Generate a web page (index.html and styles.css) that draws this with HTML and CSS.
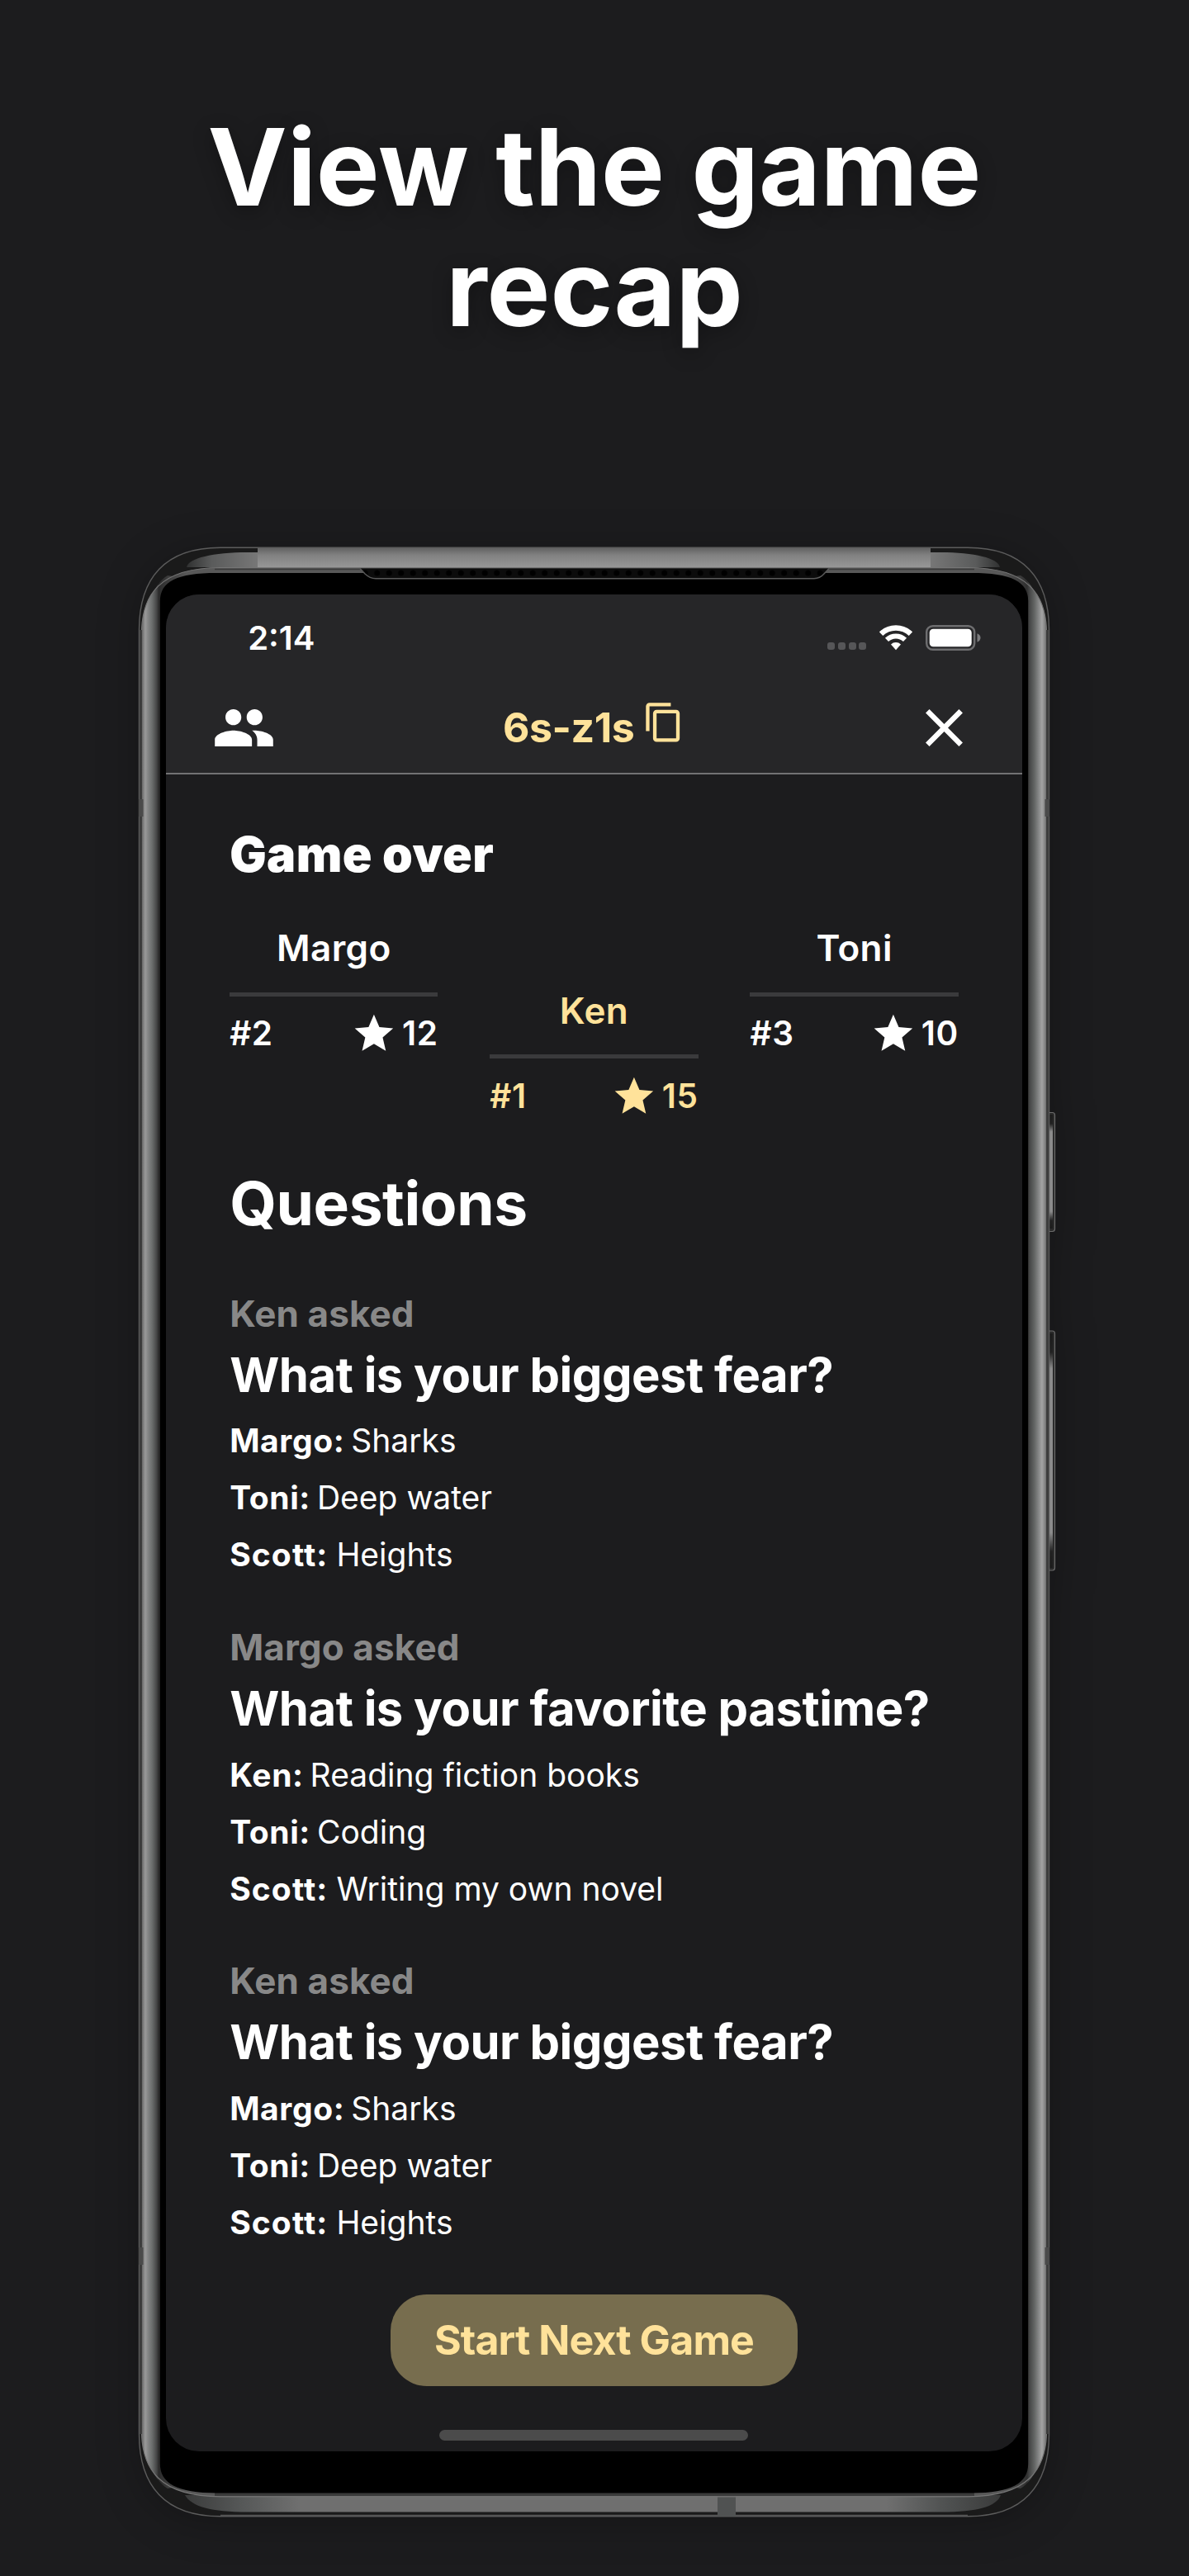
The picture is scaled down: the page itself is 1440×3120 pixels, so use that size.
FILE: index.html
```
<!DOCTYPE html>
<html lang="en">
<head>
<meta charset="utf-8">
<title>View the game recap</title>
<link rel="stylesheet" href="styles.css">
</head>
<body>
<main class="page">
  <h1 class="headline">View the game<br>recap</h1>

  <div class="phone">
    <svg class="device" viewBox="160 655 1120 2400" aria-hidden="true">
      <defs>
        <linearGradient id="metal" gradientUnits="userSpaceOnUse" x1="171" x2="1268" y1="0" y2="0">
          <stop offset="0" stop-color="#5c5c5c"/>
          <stop offset=".0045" stop-color="#9a9a9a"/>
          <stop offset=".0075" stop-color="#858686"/>
          <stop offset=".012" stop-color="#6b6e6d"/>
          <stop offset=".0165" stop-color="#4a4b4b"/>
          <stop offset=".0195" stop-color="#2a2a2a"/>
          <stop offset=".022" stop-color="#303030"/>
          <stop offset=".05" stop-color="#585858"/>
          <stop offset=".95" stop-color="#585858"/>
          <stop offset=".978" stop-color="#303030"/>
          <stop offset=".9805" stop-color="#444545"/>
          <stop offset=".986" stop-color="#626463"/>
          <stop offset=".9905" stop-color="#848585"/>
          <stop offset=".9945" stop-color="#a4a4a4"/>
          <stop offset=".998" stop-color="#808080"/>
          <stop offset="1" stop-color="#5c5c5c"/>
        </linearGradient>
        <linearGradient id="topBand" x1="0" x2="0" y1="0" y2="1">
          <stop offset="0" stop-color="#626262"/>
          <stop offset=".35" stop-color="#808080"/>
          <stop offset="1" stop-color="#979797"/>
        </linearGradient>
        <linearGradient id="capLeft" x1="0" x2="1" y1="0" y2="0">
          <stop offset="0" stop-color="#303131"/>
          <stop offset=".35" stop-color="#5a5b5b"/>
          <stop offset="1" stop-color="#777"/>
        </linearGradient>
        <linearGradient id="capRight" x1="1" x2="0" y1="0" y2="0">
          <stop offset="0" stop-color="#303131"/>
          <stop offset=".35" stop-color="#5a5b5b"/>
          <stop offset="1" stop-color="#777"/>
        </linearGradient>
        <linearGradient id="bottomBand" x1="0" x2="1" y1="0" y2="0">
          <stop offset="0" stop-color="#3a3b3b"/>
          <stop offset=".07" stop-color="#565858"/>
          <stop offset=".14" stop-color="#6f6f6f"/>
          <stop offset=".86" stop-color="#6f6f6f"/>
          <stop offset=".93" stop-color="#505252"/>
          <stop offset="1" stop-color="#3a3b3b"/>
        </linearGradient>
        <linearGradient id="key" x1="0" x2="0" y1="0" y2="1">
          <stop offset="0" stop-color="#1c1c1c"/>
          <stop offset=".08" stop-color="#222"/>
          <stop offset=".15" stop-color="#8c8c8c"/>
          <stop offset=".85" stop-color="#8c8c8c"/>
          <stop offset=".93" stop-color="#222"/>
          <stop offset="1" stop-color="#1c1c1c"/>
        </linearGradient>
        <pattern id="mesh" patternUnits="userSpaceOnUse" x="449.5" y="686" width="14.5" height="15">
          <rect width="14.5" height="15" fill="#0c0c0c"/>
          <circle cx="7.2" cy="8" r="3.6" fill="#000"/>
        </pattern>
      </defs>

      <!-- side keys -->
      <rect x="1267" y="1347.5" width="10.5" height="144" rx="3" fill="#2a2a2a" stroke="#6a6a6a" stroke-width="1.2"/>
      <rect x="1269" y="1350" width="6" height="138" fill="url(#key)"/>
      <rect x="1267" y="1612" width="10.5" height="290" rx="3" fill="#2a2a2a" stroke="#6a6a6a" stroke-width="1.2"/>
      <rect x="1269" y="1615" width="6" height="284" fill="url(#key)"/>

      <!-- outer shell -->
      <path d="M168.500 763C168.500 700 200 663.200 267 663.200H1172C1239 663.200 1270.500 700 1270.500 763V2948C1270.500 3011 1239 3047.800 1172 3047.800H267C200 3047.800 168.500 3011 168.500 2948Z" fill="#1a1a1a" stroke="#5c5c5c" stroke-width="1.4"/>
      <path d="M170 763V2948M1269 763V2948" stroke="#3c3c3c" stroke-width="2"/>

      <!-- top edge -->
      <path d="M226 687C228 676 258 669 300 669H312V687Z" fill="url(#capLeft)"/>
      <path d="M1211 687C1209 676 1180 669 1139 669H1127V687Z" fill="url(#capRight)"/>
      <rect x="312" y="664" width="815" height="23" fill="url(#topBand)"/>

      <!-- bottom edge -->
      <path d="M224 3022C232 3036 256 3042.500 300 3042.500H1140C1183 3042.500 1207 3036 1212 3022Z" fill="url(#bottomBand)"/>
      <path d="M267 3046.500H1172" stroke="#525252" stroke-width="1.5"/>
      <rect x="869" y="3023" width="22" height="24.500" fill="#505252"/>

      <!-- rim -->
      <path d="M172 790C172 745 184 708 203 697L225 700V3010L203 3014C184 3003 172 2970 172 2925Z" fill="url(#metal)"/>
      <path d="M1267 790C1267 745 1255 708 1236 697L1214 700V3010L1236 3014C1255 3003 1267 2970 1267 2925Z" fill="url(#metal)"/>
      <path d="M171.500 763C173 722 192 687.500 267 687.500H1172C1247 687.500 1266 722 1267.500 763V2948C1266 2989 1247 3023.800 1172 3023.800H267C192 3023.800 173 2989 171.500 2948Z" fill="url(#metal)"/>
      <path d="M171.500 763C173 722 192 687.500 267 687.500H1172C1247 687.500 1266 722 1267.500 763M1267.500 2948C1266 2989 1247 3023.800 1172 3023.800H267C192 3023.800 173 2989 171.500 2948" fill="none" stroke="#757575" stroke-width="1.2"/>
      <path d="M260 3021H1180" stroke="#3a3a3a" stroke-width="4"/>
      <path d="M260 689.500H1180" stroke="#3a3a3a" stroke-width="1.500"/>

      <!-- antenna breaks -->
      <path d="M168 968H173.500V989H168ZM168 2722H173.500V2743H168ZM1265.500 968H1271V989H1265.500ZM1265.500 2722H1271V2743H1265.500Z" fill="#4a4a4a"/>

      <!-- glass -->
      <path d="M193.800 728C193.800 704 215 694 262 694H1177C1224 694 1245.200 704 1245.200 728V2984C1245.200 3008 1224 3019.500 1177 3019.500H262C215 3019.500 193.800 3008 193.800 2984Z" fill="#000"/>

      <!-- earpiece -->
      <path d="M436 688.500L442 695Q448 700.700 455 700.700H986Q993 700.700 998 695L1004 688.500Z" fill="url(#mesh)"/>
      <path d="M436 688.500L442 695Q448 700.700 455 700.700H986Q993 700.700 998 695L1004 688.500" fill="none" stroke="#5a5a5a" stroke-width="1.4"/>
    </svg>

    <section class="screen">
      <header class="topbar">
        <div class="status">
          <span class="time">2:14</span>
          <span class="status-icons">
            <span class="signal"><i></i><i></i><i></i><i></i></span>
            <svg class="wifi" viewBox="0 0 40 31" aria-hidden="true">
              <path d="M2.100 10.650A26 26 0 0 1 37.900 10.650" fill="none" stroke="#fff" stroke-width="6.300"/>
              <path d="M9 17.900A16 16 0 0 1 31 17.900" fill="none" stroke="#fff" stroke-width="6"/>
              <path d="M14 23.400A8.700 8.700 0 0 1 26 23.400L20 30.300Z" fill="#fff"/>
            </svg>
            <svg class="battery" viewBox="0 0 67 31" aria-hidden="true">
              <rect x="1.200" y="1.200" width="58" height="28.600" rx="7.500" fill="none" stroke="#6e6e70" stroke-width="2.400"/>
              <rect x="4.700" y="4.700" width="51" height="21.600" rx="4.500" fill="#fff"/>
              <path d="M62.500 10.300C65.300 11.300 66.500 13.300 66.500 15.500S65.300 19.700 62.500 20.700Z" fill="#7c7c7e"/>
            </svg>
          </span>
        </div>
        <nav class="nav">
          <svg class="nav-icon" viewBox="0 0 24 24" aria-hidden="true"><path d="M16 11c1.660 0 2.990-1.340 2.990-3S17.660 5 16 5c-1.660 0-3 1.340-3 3s1.340 3 3 3zm-8 0c1.660 0 2.990-1.340 2.990-3S9.660 5 8 5C6.340 5 5 6.340 5 8s1.340 3 3 3zm0 2c-2.330 0-7 1.170-7 3.500V19h14v-2.500c0-2.330-4.670-3.500-7-3.500zm8 0c-.29 0-.62.020-.97.050 1.160.84 1.970 1.970 1.970 3.450V19h6v-2.500c0-2.330-4.670-3.500-7-3.500z"/></svg>
          <div class="room">
            <span>6s-z1s</span>
            <svg class="copy" viewBox="0 0 24 24" aria-hidden="true"><path d="M16 1H4c-1.100 0-2 .9-2 2v14h2V3h12V1zm3 4H8c-1.100 0-2 .9-2 2v14c0 1.100.9 2 2 2h11c1.100 0 2-.9 2-2V7c0-1.100-.9-2-2-2zm0 16H8V7h11v14z"/></svg>
          </div>
          <svg class="nav-icon" viewBox="0 0 24 24" aria-hidden="true"><path d="M19 6.410 17.590 5 12 10.590 6.410 5 5 6.410 10.590 12 5 17.590 6.410 19 12 13.410 17.590 19 19 17.590 13.410 12z"/></svg>
        </nav>
      </header>

      <div class="content">
        <h2 class="game-over">Game over</h2>
        <div class="podium">
          <div class="player">
            <div class="name">Margo</div>
            <div class="score"><span>#2</span><span class="points"><svg class="star" viewBox="0 0 24 24" aria-hidden="true"><path d="M12 17.270 18.180 21l-1.640-7.030L22 9.240l-7.190-.61L12 2 9.190 8.630 2 9.240l5.460 4.730L5.820 21z"/></svg>12</span></div>
          </div>
          <div class="player winner">
            <div class="name">Ken</div>
            <div class="score"><span>#1</span><span class="points"><svg class="star" viewBox="0 0 24 24" aria-hidden="true"><path d="M12 17.270 18.180 21l-1.640-7.030L22 9.240l-7.190-.61L12 2 9.190 8.630 2 9.240l5.460 4.730L5.820 21z"/></svg>15</span></div>
          </div>
          <div class="player">
            <div class="name">Toni</div>
            <div class="score"><span>#3</span><span class="points"><svg class="star" viewBox="0 0 24 24" aria-hidden="true"><path d="M12 17.270 18.180 21l-1.640-7.030L22 9.240l-7.190-.61L12 2 9.190 8.630 2 9.240l5.460 4.730L5.820 21z"/></svg>10</span></div>
          </div>
        </div>

        <h2 class="questions-title">Questions</h2>
        <div class="questions">
          <article>
            <p class="asker">Ken asked</p>
            <h3 class="question">What is your biggest fear?</h3>
            <p class="answer"><b>Margo:</b> Sharks</p>
            <p class="answer"><b>Toni:</b> Deep water</p>
            <p class="answer"><b class="loose">Scott:</b> Heights</p>
          </article>
          <article>
            <p class="asker">Margo asked</p>
            <h3 class="question">What is your favorite pastime?</h3>
            <p class="answer"><b>Ken:</b> Reading fiction books</p>
            <p class="answer"><b>Toni:</b> Coding</p>
            <p class="answer"><b class="loose">Scott:</b> Writing my own novel</p>
          </article>
          <article>
            <p class="asker">Ken asked</p>
            <h3 class="question">What is your biggest fear?</h3>
            <p class="answer"><b>Margo:</b> Sharks</p>
            <p class="answer"><b>Toni:</b> Deep water</p>
            <p class="answer"><b class="loose">Scott:</b> Heights</p>
          </article>
        </div>

        <button class="start">Start Next Game</button>
        <div class="home-indicator"></div>
      </div>
    </section>
  </div>
</main>
</body>
</html>
```
FILE: styles.css
```
* { box-sizing: border-box; margin: 0; }

body {
  background: #1c1c1e;
  color: #fff;
  font-family: Inter, "Liberation Sans", sans-serif;
}

.page { width: 1440px; height: 3120px; padding-top: 129px; overflow: hidden; }

.headline {
  font-size: 129px;
  font-weight: 700;
  line-height: 146px;
  word-spacing: 2px;
  text-align: center;
  text-shadow: 0 6px 24px rgba(0, 0, 0, .3);
}

.phone {
  display: grid;
  width: 1120px;
  height: 2400px;
  margin: 234px 0 0 160px;
}
.phone > * { grid-area: 1 / 1; }
.device {
  width: 1120px;
  height: 2400px;
  overflow: visible;
  filter: drop-shadow(0 6px 24px rgba(0, 0, 0, .25));
}

.screen {
  z-index: 1;
  width: 1037.600px;
  height: 2248.700px;
  margin: 65.300px 0 0 40.700px;
  border-radius: 40px;
  background: #1c1c1e;
  overflow: hidden;
}

.topbar {
  height: 218px;
  background: #262628;
  border-bottom: 2px solid #727274;
}

.status {
  display: flex;
  justify-content: space-between;
  align-items: center;
  height: 103.700px;
  padding: 0 50px 0 99.500px;
}
.time { font-size: 40px; font-weight: 600; }
.status-icons { display: flex; align-items: center; gap: 16px; }
.signal { display: flex; gap: 3.700px; margin-top: 21px; }
.signal i { width: 9px; height: 9px; border-radius: 3px; background: #565658; }
.wifi { width: 40px; height: 31px; }
.battery { width: 67px; height: 31px; }

.nav {
  display: flex;
  justify-content: space-between;
  align-items: center;
  height: 113px;
  padding: 2px 56px 0;
}
.nav-icon { width: 77px; height: 77px; fill: #fff; }
.room {
  display: flex;
  align-items: center;
  gap: 10px;
  color: #ffe29a;
  font-size: 50px;
  font-weight: 700;
  letter-spacing: -.45px;
}
.copy { width: 51.600px; height: 51.600px; margin-bottom: 14px; fill: currentColor; }

.content {
  display: flex;
  flex-direction: column;
  padding: 57px 77.500px 0;
}

.game-over { font-size: 59px; font-weight: 900; line-height: 80px; letter-spacing: .4px; }

.podium {
  display: grid;
  grid-template-columns: repeat(3, 252.300px);
  justify-content: space-between;
  align-items: start;
  margin-top: 44px;
  font-weight: 600;
}
.winner { margin-top: 75.700px; color: #ffe29a; }
.name {
  height: 87.500px;
  border-bottom: 5px solid #3a3a3c;
  font-size: 44px;
  line-height: 58px;
  letter-spacing: .4px;
  text-align: center;
}
.score {
  display: flex;
  justify-content: space-between;
  align-items: center;
  height: 56px;
  margin-top: 17px;
  font-size: 40.500px;
  letter-spacing: .6px;
}
.points { display: flex; align-items: center; gap: 6px; }
.star { width: 55.800px; height: 55.800px; margin-top: 1px; fill: currentColor; }

.questions-title { margin-top: 57.300px; font-size: 73px; font-weight: 700; line-height: 90px; letter-spacing: -.4px; }

.questions { display: flex; flex-direction: column; gap: 47.800px; margin-top: 58px; }
.asker { color: #888; font-size: 44px; font-weight: 700; line-height: 60px; letter-spacing: .1px; }
.question { margin: 4px 0 5.500px; font-size: 58px; font-weight: 700; line-height: 80px; letter-spacing: -.5px; }
.answer { font-size: 39px; line-height: 69px; }
.answer b { margin-right: -3px; font-weight: 700; letter-spacing: .6px; }
.answer .loose { margin-right: -1px; letter-spacing: 1.100px; }

.start {
  align-self: center;
  width: 493.300px;
  height: 111px;
  margin-top: 53px;
  padding: 0;
  border: 0;
  border-radius: 44px;
  background: #776d4e;
  color: #ffe29a;
  font: 700 50px/111px Inter, "Liberation Sans", sans-serif;
  letter-spacing: -.9px;
}
.home-indicator {
  align-self: center;
  width: 374px;
  height: 13px;
  margin-top: 53px;
  border-radius: 7px;
  background: #4b4b4b;
}
```
